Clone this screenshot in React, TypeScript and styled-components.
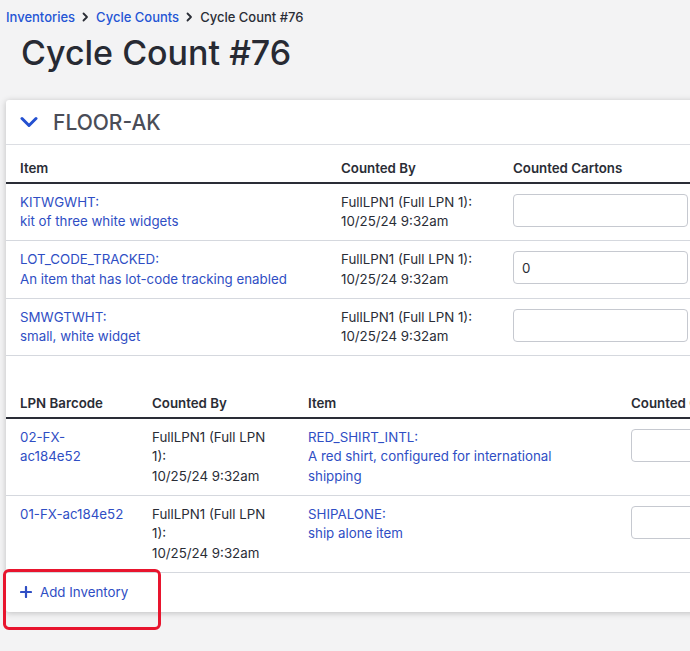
import React from 'react'
import styled, { createGlobalStyle } from 'styled-components'

const GlobalStyle = createGlobalStyle`
  html, body {
    margin: 0;
    padding: 0;
    overflow: hidden;
    background: #f3f3f4;
    font-family: Inter, "Noto Sans", sans-serif;
    color: #2a2d36;
  }
`

const Page = styled.div`
  padding: 8px 0 40px 6px;
  width: 820px;
`

const Breadcrumbs = styled.nav`
  display: flex;
  align-items: center;
  gap: 7px;
  font-size: 13px;
  line-height: 18px;
  font-weight: 500;
`

const Crumb = styled.a<{ $current?: boolean }>`
  color: ${({ $current }) => ($current ? '#2a2d36' : '#2455d4')};
  text-decoration: none;
`

const Sep = styled.span`
  display: flex;
  color: #2a2d36;
`

const Title = styled.h1`
  margin: 7px 0 27px 15px;
  font-size: 34px;
  line-height: 40px;
  font-weight: 500;
  color: #272a33;
`

const Card = styled.section`
  width: 800px;
  background: #fff;
  box-shadow: 0 1px 6px rgba(0, 0, 0, 0.22);
  border-radius: 3px;
`

const CardHeader = styled.header`
  display: flex;
  align-items: center;
  gap: 15px;
  height: 44px;
  padding: 0 14px;
  border-bottom: 1px solid #dcdee3;
`

const Location = styled.h2`
  margin: 0;
  font-size: 21px;
  font-weight: 500;
  color: #4a4d57;
`

const Table = styled.table<{ $gap?: number }>`
  width: 100%;
  table-layout: fixed;
  border-collapse: collapse;
  margin-top: ${({ $gap }) => $gap ?? 0}px;
  font-size: 13.3px;
  line-height: 19.5px;
`

const Th = styled.th`
  text-align: left;
  font-weight: 600;
  padding: 14px 14px 3px;
  border-bottom: 2px solid #2a2d36;
  white-space: nowrap;
`

const Td = styled.td<{ $tight?: boolean }>`
  vertical-align: top;
  padding: 9px ${({ $tight }) => ($tight ? 22 : 14)}px 8.5px 14px;
  border-bottom: 1px solid #d5d8de;
`

const Link = styled.a`
  display: block;
  color: #2f4ec4;
  text-decoration: none;
`

const CountInput = styled.input`
  box-sizing: border-box;
  width: 175px;
  height: 33px;
  margin-top: 1px;
  padding: 0 8px;
  border: 1px solid #c6c9d0;
  border-radius: 4px;
  font-family: inherit;
  font-size: 13.3px;
  color: #2a2d36;
  outline: none;
`

const Footer = styled.div`
  position: relative;
  display: flex;
  align-items: center;
  height: 39px;
  padding: 0 14px;
`

const AddButton = styled.button`
  display: flex;
  align-items: center;
  gap: 8px;
  padding: 0;
  border: none;
  background: none;
  font-family: inherit;
  font-size: 13.3px;
  color: #2f4ec4;
  cursor: pointer;
`

// red annotation box drawn over the footer
const Highlight = styled.div`
  position: absolute;
  left: -3px;
  top: -4px;
  width: 152px;
  height: 55px;
  border: 3px solid #e8152e;
  border-radius: 6px;
  pointer-events: none;
`

const Chevron = () => (
  <svg width="18" height="12" viewBox="0 0 18 12" fill="none">
    <path d="M2 2.5 L9 9.5 L16 2.5" stroke="#2450d0" strokeWidth="3" strokeLinecap="round" strokeLinejoin="round" />
  </svg>
)

const CrumbArrow = () => (
  <svg width="7" height="10" viewBox="0 0 7 10" fill="none">
    <path d="M1.5 1.5 L5 5 L1.5 8.5" stroke="#2a2d36" strokeWidth="1.8" strokeLinecap="round" strokeLinejoin="round" />
  </svg>
)

const Plus = () => (
  <svg width="12" height="12" viewBox="0 0 12 12" fill="none">
    <path d="M6 1 V11 M1 6 H11" stroke="#2f4ec4" strokeWidth="2.2" strokeLinecap="round" />
  </svg>
)

const countedBy = 'FullLPN1 (Full LPN 1):'
const countedAt = '10/25/24 9:32am'

const items = [
  { sku: 'KITWGWHT:', name: 'kit of three white widgets', value: '' },
  { sku: 'LOT_CODE_TRACKED:', name: 'An item that has lot-code tracking enabled', value: '0' },
  { sku: 'SMWGTWHT:', name: 'small, white widget', value: '' },
]

const lpns = [
  { barcode: ['02-FX-', 'ac184e52'], sku: 'RED_SHIRT_INTL:', name: 'A red shirt, configured for international shipping' },
  { barcode: ['01-FX-ac184e52'], sku: 'SHIPALONE:', name: 'ship alone item' },
]

export default function App() {
  return (
    <Page>
      <GlobalStyle />
      <Breadcrumbs>
        <Crumb href="#">Inventories</Crumb>
        <Sep><CrumbArrow /></Sep>
        <Crumb href="#">Cycle Counts</Crumb>
        <Sep><CrumbArrow /></Sep>
        <Crumb $current>Cycle Count #76</Crumb>
      </Breadcrumbs>
      <Title>Cycle Count #76</Title>

      <Card>
        <CardHeader>
          <Chevron />
          <Location>FLOOR-AK</Location>
        </CardHeader>

        <Table>
          <colgroup>
            <col style={{ width: 321 }} />
            <col style={{ width: 172 }} />
            <col />
          </colgroup>
          <thead>
            <tr>
              <Th>Item</Th>
              <Th>Counted By</Th>
              <Th>Counted Cartons</Th>
            </tr>
          </thead>
          <tbody>
            {items.map((it) => (
              <tr key={it.sku}>
                <Td>
                  <Link href="#">{it.sku}</Link>
                  <Link href="#">{it.name}</Link>
                </Td>
                <Td>
                  <div>{countedBy}</div>
                  <div>{countedAt}</div>
                </Td>
                <Td>
                  <CountInput defaultValue={it.value} />
                </Td>
              </tr>
            ))}
          </tbody>
        </Table>

        <Table $gap={24}>
          <colgroup>
            <col style={{ width: 132 }} />
            <col style={{ width: 156 }} />
            <col style={{ width: 323 }} />
            <col />
          </colgroup>
          <thead>
            <tr>
              <Th>LPN Barcode</Th>
              <Th>Counted By</Th>
              <Th>Item</Th>
              <Th>Counted Cartons</Th>
            </tr>
          </thead>
          <tbody>
            {lpns.map((l) => (
              <tr key={l.sku}>
                <Td>
                  {l.barcode.map((part) => (
                    <Link href="#" key={part}>{part}</Link>
                  ))}
                </Td>
                <Td $tight>
                  <div>{countedBy}</div>
                  <div>{countedAt}</div>
                </Td>
                <Td $tight>
                  <Link href="#">{l.sku}</Link>
                  <Link href="#">{l.name}</Link>
                </Td>
                <Td>
                  <CountInput defaultValue="" />
                </Td>
              </tr>
            ))}
          </tbody>
        </Table>

        <Footer>
          <AddButton>
            <Plus />
            Add Inventory
          </AddButton>
          <Highlight />
        </Footer>
      </Card>
    </Page>
  )
}
